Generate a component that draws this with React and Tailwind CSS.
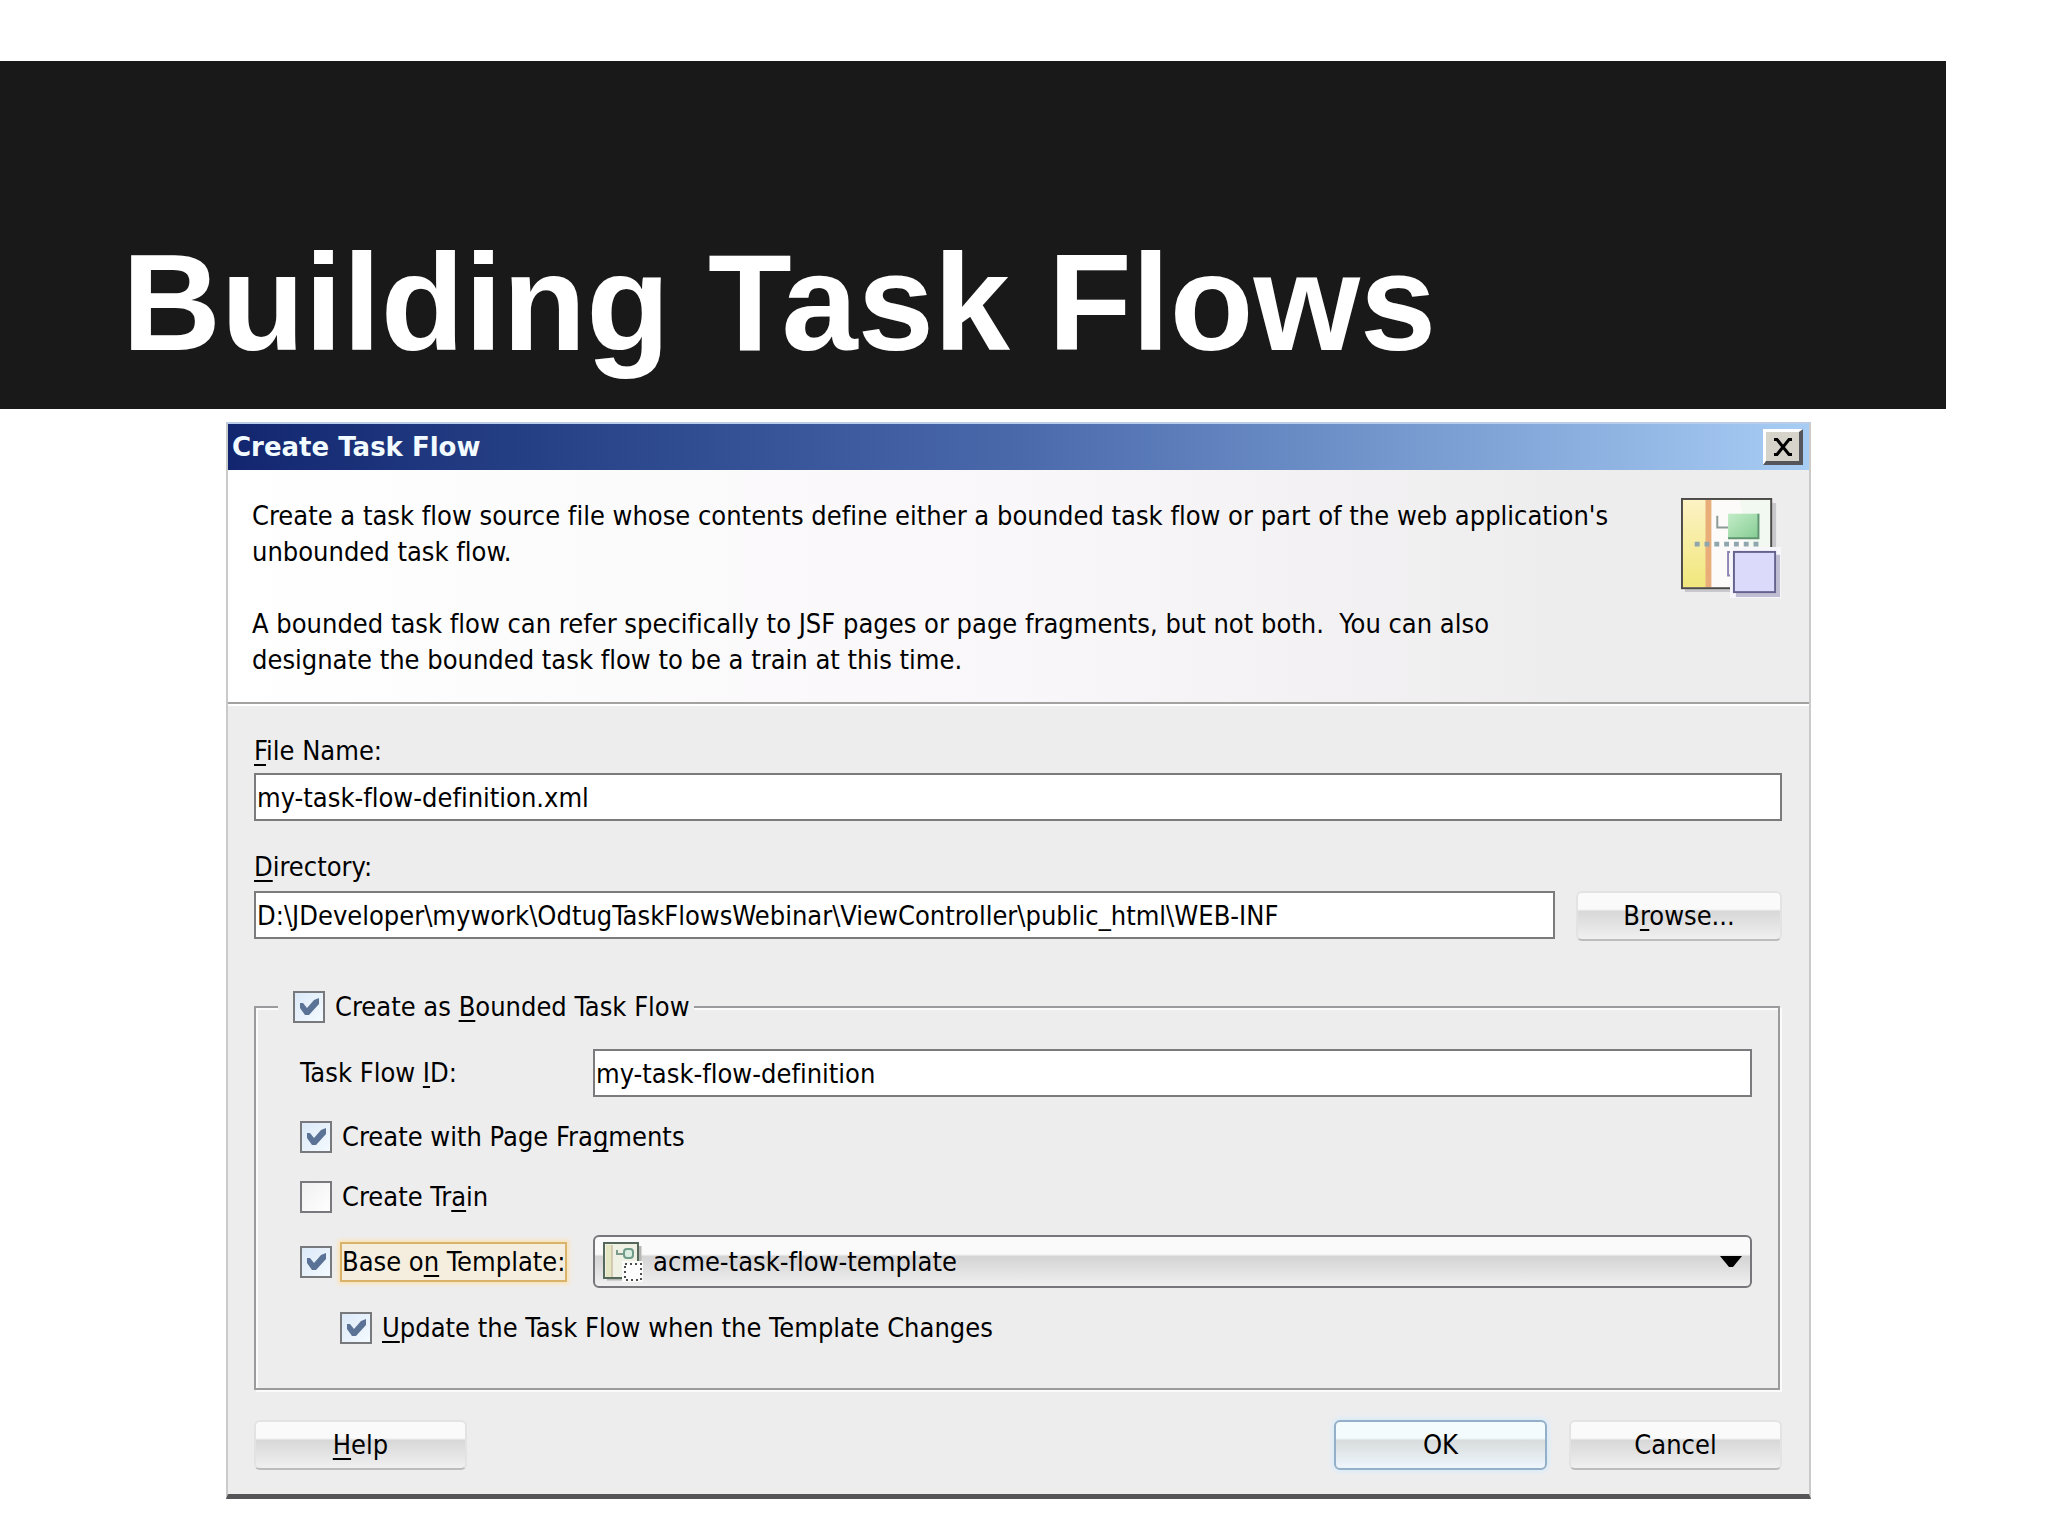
import { useState } from "react";

const FIELD =
  "h-12 w-full border-2 border-[#7b7b7d] bg-white pl-px text-black outline-none";

const BUTTON =
  "h-[50px] rounded-md border-2 border-[#e4e3e4] border-b-[#bdbcbd] bg-linear-to-b from-[#fbfafb] from-35% via-[#d9d8d9] via-40% to-[#f1f0f1] text-black";

/* Underlined shortcut letter inside a label */
function Key({ children }) {
  return (
    <span className="underline decoration-2 underline-offset-4 [text-decoration-skip-ink:none]">
      {children}
    </span>
  );
}

function Tick({ id, defaultChecked }) {
  const [checked, setChecked] = useState(defaultChecked);
  return (
    <span className="grid size-8 shrink-0">
      <input
        id={id}
        type="checkbox"
        checked={checked}
        onChange={(e) => setChecked(e.target.checked)}
        className="col-start-1 row-start-1 size-8 appearance-none border-2 border-[#77797c] bg-linear-to-br from-[#f1f0f1] to-white checked:from-[#dbe9f8] checked:to-[#f4faff]"
      />
      {checked && (
        <svg
          viewBox="0 0 32 32"
          className="pointer-events-none col-start-1 row-start-1 size-8"
        >
          <path
            d="M7 12h3l4 5 7-8 5-2v6L16 24h-4l-5-7z"
            fill="#5a7295"
          />
        </svg>
      )}
    </span>
  );
}

function TaskFlowIcon() {
  return (
    <svg viewBox="0 0 102 102" className="size-[100px] shrink-0">
      <defs>
        <linearGradient id="lane" x1="0" y1="0" x2="0" y2="1">
          <stop offset="0" stopColor="#fcf2c4" />
          <stop offset="1" stopColor="#f1e77c" />
        </linearGradient>
        <linearGradient id="green" x1="0" y1="0" x2="1" y2="1">
          <stop offset="0" stopColor="#c3edc8" />
          <stop offset="1" stopColor="#86cc93" />
        </linearGradient>
      </defs>
      <path d="M4 94h48M95 5v50" stroke="#c9c8cc" strokeWidth="4" />
      <rect x="1" y="1" width="91" height="91" fill="#fdfbfa" />
      <rect x="2" y="2" width="24" height="89" fill="url(#lane)" />
      <rect x="25" y="2" width="6" height="89" fill="#e8ad78" />
      <path d="M60 2h31v50H70z" fill="#e9f8ea" opacity=".6" />
      <rect x="1" y="1" width="91" height="91" fill="none" stroke="#4d4b47" strokeWidth="2" />
      <path d="M37 18v12h11" fill="none" stroke="#8b9a94" strokeWidth="2" />
      <rect x="48" y="16" width="31" height="25" fill="url(#green)" />
      <path d="M48 41h31V16" fill="none" stroke="#5f9470" strokeWidth="2" />
      <path d="M14 47h68" stroke="#8fa6ae" strokeWidth="5" strokeDasharray="5 5" />
      <path d="M54 55h-6v24h6" fill="none" stroke="#8d86b5" strokeWidth="2" />
      <rect x="50" y="50" width="52" height="52" fill="#f7f6fb" />
      <path d="M56 99h43V58" fill="none" stroke="#c0bed2" strokeWidth="4" />
      <rect x="54" y="55" width="42" height="41" fill="#dcdafa" stroke="#65638e" strokeWidth="2" />
    </svg>
  );
}

function TemplateIcon() {
  return (
    <svg viewBox="0 0 40 40" className="size-10">
      <path d="M37 4v16M4 37h16" stroke="#b5b8b2" strokeWidth="3" />
      <rect x="1" y="1" width="34" height="35" fill="#eef1e4" stroke="#55685a" strokeWidth="2" />
      <rect x="3" y="3" width="6" height="32" fill="#e5e6c4" />
      <path d="M9 3v32" stroke="#b9a98c" strokeWidth="1" />
      <path d="M14 8v4h6" fill="none" stroke="#7d9a8b" strokeWidth="2" />
      <rect x="21" y="7" width="9" height="9" rx="3" fill="#d9eedf" stroke="#6f9c8a" strokeWidth="2" />
      <rect x="19" y="19" width="21" height="21" fill="#fbfbfa" />
      <rect x="22" y="22" width="16" height="16" fill="#fff" stroke="#4a4d4b" strokeWidth="2" strokeDasharray="2 3" />
    </svg>
  );
}

export default function App() {
  return (
    <div className="min-h-screen bg-white pt-[61px] pb-9">
      {/* Slide title */}
      <header className="mr-[102px] flex h-[348px] items-end bg-[#191919] pb-6 pl-[122px]">
        <h1 className="font-['Liberation_Sans',Arial,sans-serif] text-[137px] leading-[164px] font-bold text-white">
          Building Task Flows
        </h1>
      </header>

      {/* Dialog window */}
      <section className="mt-[13px] mr-[237px] ml-[226px] border-x-2 border-t-2 border-b-[5px] border-x-[#cbcacb] border-t-[#b9cdea] border-b-[#555457] bg-[#eeedee] font-['DejaVu_Sans_Condensed','DejaVu_Sans',sans-serif] text-[27px] leading-9 text-black [font-variant-ligatures:none]">
        <div className="flex h-[46px] items-center justify-between bg-linear-to-r from-[#12266f] via-[#4a69ab] to-[#a8cdf4] pr-[6px] pl-1">
          <h2 className="font-['DejaVu_Sans',sans-serif] text-[26px] font-bold text-[#f2fbff]">
            Create Task Flow
          </h2>
          <button
            aria-label="Close"
            className="grid h-9 w-10 place-items-center border-t-3 border-r-4 border-b-4 border-l-3 border-t-white border-r-[#55565c] border-b-[#55565c] border-l-white bg-[#d6d3cb]"
          >
            <svg viewBox="0 0 22 18" className="h-[18px] w-[22px]">
              <path
                d="M2 1.5h3l12 15h3M20 1.5h-3l-12 15H2"
                fill="none"
                stroke="#000"
                strokeWidth="3"
              />
            </svg>
          </button>
        </div>

        <div className="flex h-[234px] items-start justify-between border-b-2 border-[#a3a2a0] bg-linear-to-r from-white via-[#f9f7f9] to-[#eeedee] to-85% pt-7 pr-7 pl-6">
          <div className="space-y-9">
            <p>
              Create a task flow source file whose contents define either a
              bounded task flow or part of the web application's
              <br />
              unbounded task flow.
            </p>
            <p>
              A bounded task flow can refer specifically to JSF pages or page
              fragments, but not both.&nbsp; You can also
              <br />
              designate the bounded task flow to be a train at this time.
            </p>
          </div>
          <TaskFlowIcon />
        </div>

        <form
          onSubmit={(e) => e.preventDefault()}
          className="border-t-2 border-white pt-[27px] pr-[27px] pb-6 pl-[26px]"
        >
          <label htmlFor="file" className="block">
            <Key>F</Key>ile Name:
          </label>
          <input
            id="file"
            type="text"
            defaultValue="my-task-flow-definition.xml"
            className={`mt-1 ${FIELD}`}
          />

          <label htmlFor="dir" className="mt-7 block">
            <Key>D</Key>irectory:
          </label>
          <div className="mt-[6px] flex gap-[21px]">
            <input
              id="dir"
              type="text"
              defaultValue="D:\JDeveloper\mywork\OdtugTaskFlowsWebinar\ViewController\public_html\WEB-INF"
              className={FIELD}
            />
            <button type="button" className={`w-[206px] shrink-0 ${BUTTON}`}>
              B<Key>r</Key>owse...
            </button>
          </div>

          {/* Bounded task flow options */}
          <fieldset className="mt-12 mr-[2px] border-2 border-[#9b9a9c] pr-[26px] pb-[42px] pl-11 shadow-[2px_2px_0_#fbfbfb,inset_2px_2px_0_#fbfbfb]">
            <legend className="-ml-[22px] flex items-center gap-[10px] bg-[#eeedee] pr-1 pl-[15px]">
              <Tick id="bounded" defaultChecked />
              <label htmlFor="bounded">
                Create as <Key>B</Key>ounded Task Flow
              </label>
            </legend>

            <div className="mt-6 flex items-center">
              <label htmlFor="flowId" className="w-[293px] shrink-0">
                Task Flow <Key>I</Key>D:
              </label>
              <input
                id="flowId"
                type="text"
                defaultValue="my-task-flow-definition"
                className={FIELD}
              />
            </div>

            <div className="mt-[22px] flex items-center gap-[10px]">
              <Tick id="fragments" defaultChecked />
              <label htmlFor="fragments">
                Create with Page Fra<Key>g</Key>ments
              </label>
            </div>

            <div className="mt-6 flex items-center gap-[10px]">
              <Tick id="train" defaultChecked={false} />
              <label htmlFor="train">
                Create Tr<Key>a</Key>in
              </label>
            </div>

            <div className="mt-5 flex items-center">
              <div className="flex w-[293px] shrink-0 items-center gap-2">
                <Tick id="base" defaultChecked />
                <label
                  htmlFor="base"
                  className="border-2 border-[#d9b36a] bg-[#f5eedf] whitespace-nowrap shadow-[0_0_4px_2px_#fbe3b4]"
                >
                  Base o<Key>n</Key> Template:
                </label>
              </div>
              <div className="grid flex-1 items-center">
                <select
                  aria-label="Template"
                  className="col-start-1 row-start-1 h-[53px] w-full appearance-none rounded-md border-2 border-[#77767a] bg-linear-to-b from-[#fbfafb] from-35% via-[#d5d4d5] via-40% to-[#f1f0f1] pl-[58px] text-black"
                >
                  <option>acme-task-flow-template</option>
                </select>
                <span className="pointer-events-none col-start-1 row-start-1 flex items-center justify-between pr-[10px] pl-[10px]">
                  <TemplateIcon />
                  <svg viewBox="0 0 22 12" className="h-3 w-[22px]">
                    <path d="M0 0h22L13 11H9z" fill="#000" />
                  </svg>
                </span>
              </div>
            </div>

            <div className="mt-[22px] ml-10 flex items-center gap-[10px]">
              <Tick id="update" defaultChecked />
              <label htmlFor="update">
                <Key>U</Key>pdate the Task Flow when the Template Changes
              </label>
            </div>
          </fieldset>

          <div className="mt-[30px] flex gap-[22px]">
            <button type="button" className={`mr-auto w-[213px] ${BUTTON}`}>
              <Key>H</Key>elp
            </button>
            <button
              type="submit"
              className="h-[50px] w-[213px] rounded-md border-2 border-[#94afc8] bg-linear-to-b from-[#f3fbfc] from-35% via-[#d8dcdc] via-40% to-[#eef6fd] text-black shadow-[0_0_5px_2px_#d9ecfa]"
            >
              OK
            </button>
            <button type="button" className={`w-[213px] ${BUTTON}`}>
              Cancel
            </button>
          </div>
        </form>
      </section>
    </div>
  );
}
